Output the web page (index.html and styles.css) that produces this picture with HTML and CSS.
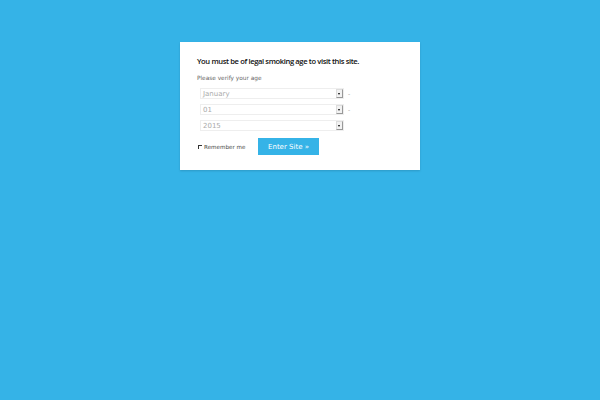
FILE: index.html
```html
<!DOCTYPE html>
<html>
<head>
<meta charset="utf-8">
<link rel="stylesheet" href="styles.css">
</head>
<body>
<div class="modal">
  <h1 class="title">You must be of legal smoking age to visit this site.</h1>
  <p class="sub">Please verify your age</p>
  <div class="row">
    <div class="sel"><span class="val">January</span><span class="arrow"></span></div>
    <span class="dash">-</span>
  </div>
  <div class="row">
    <div class="sel"><span class="val">01</span><span class="arrow"></span></div>
    <span class="dash">-</span>
  </div>
  <div class="row">
    <div class="sel"><span class="val">2015</span><span class="arrow"></span></div>
  </div>
  <div class="actions">
    <label class="remember"><span class="cb"></span>Remember me</label>
    <button class="enter">Enter Site »</button>
  </div>
</div>
</body>
</html>
```
FILE: styles.css
```css
html, body { margin: 0; padding: 0; }
body {
  width: 600px; height: 400px;
  background: #35b3e7;
  font-family: "DejaVu Sans", sans-serif;
}
.modal {
  margin: 42px 0 0 180px;
  width: 240px; height: 128px;
  box-sizing: border-box;
  background: #fff;
  padding: 14px 17px 0 17px;
  box-shadow: 0 1px 2px rgba(0,0,0,0.15);
}
.title {
  margin: 0;
  font-family: "Open Sans", sans-serif;
  font-weight: 600;
  font-size: 7.6px;
  line-height: 10px;
  color: #111;
  letter-spacing: -0.38px;
}
.sub {
  margin: 8px 0 6px 0;
  font-size: 5.8px;
  line-height: 8px;
  color: #666;
}
.row {
  display: flex; align-items: center;
  margin: 0 0 5px 3px;
  height: 11px;
}
.sel {
  position: relative;
  width: 144px; height: 11px;
  box-sizing: border-box;
  border: 1px solid #eee;
  display: flex; align-items: center;
}
.val {
  padding-left: 2px;
  font-size: 7px;
  color: #aaa;
}
.arrow {
  position: absolute; right: 0; top: 0;
  width: 7px; height: 9px;
  box-sizing: border-box;
  border: 1px solid #999;
  border-left-color: #ddd; border-top-color: #ddd;
  background: #f2f2f2;
}
.arrow::after {
  content: ""; position: absolute; left: 1px; top: 3px;
  border-left: 1.5px solid transparent; border-right: 1.5px solid transparent;
  border-top: 2px solid #000;
}
.dash {
  margin-left: 4px;
  font-size: 6px; color: #999;
}
.actions {
  display: flex; align-items: center;
  margin-top: 7px;
}
.remember {
  display: flex; align-items: center;
  font-size: 5.6px; color: #444;
  width: 61px;
}
.cb {
  width: 3px; height: 3px;
  border-left: 1px solid #333; border-top: 1px solid #333;
  margin: 1px 2px 0 1px;
}
.enter {
  width: 61px; height: 17px;
  border: 0; padding: 0;
  background: #35b3e7;
  color: #fff;
  font-family: "DejaVu Sans", sans-serif;
  font-size: 7px;
}
```
